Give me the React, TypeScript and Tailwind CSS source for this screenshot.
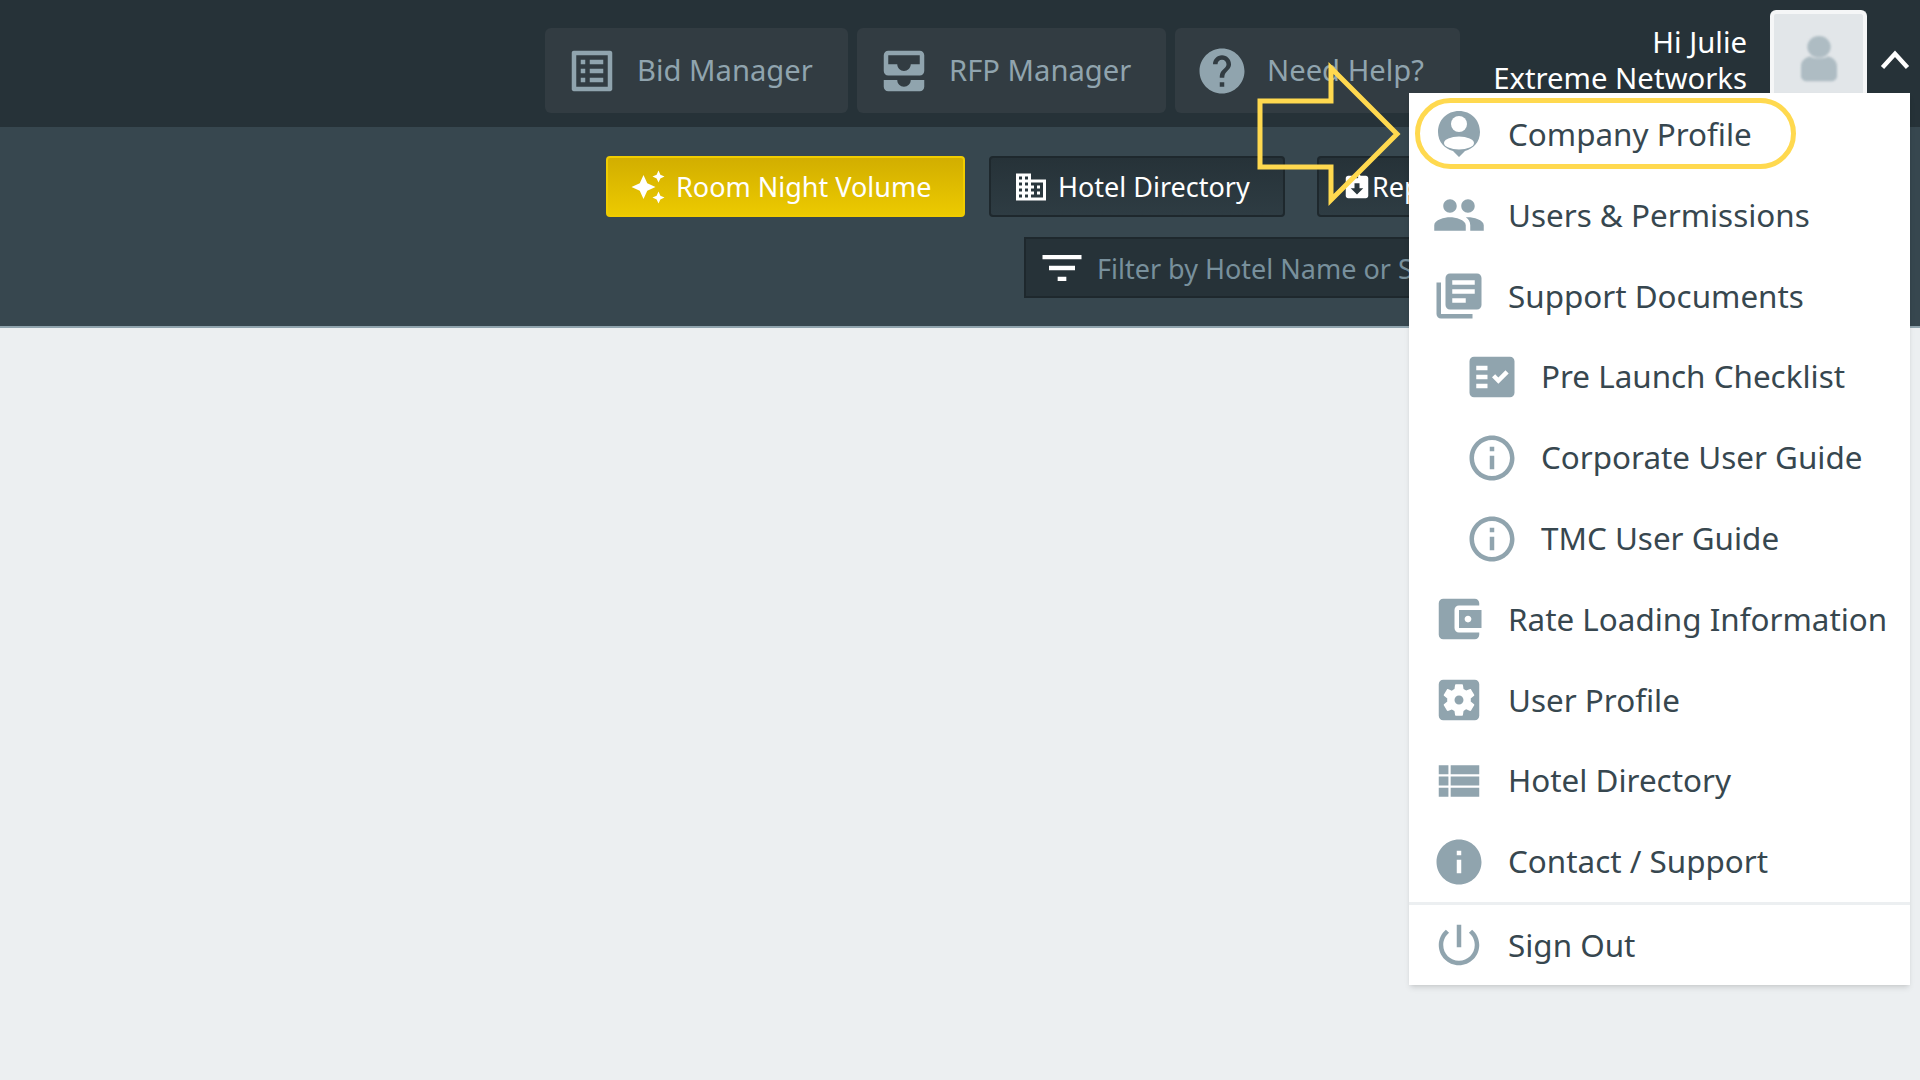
import React from "react";

// material style icon paths
const icons = {
  listAlt: "M19 5v14H5V5h14m1.1-2H3.9c-.5 0-.9.4-.9.9v16.2c0 .4.4.9.9.9h16.2c.4 0 .9-.5.9-.9V3.9c0-.5-.5-.9-.9-.9zM11 7h6v2h-6V7zm0 4h6v2h-6v-2zm0 4h6v2h-6zM7 7h2v2H7zm0 4h2v2H7zm0 4h2v2H7z",
  inbox: "M19 3H5c-1.1 0-2 .9-2 2v7c0 1.1.9 2 2 2h14c1.1 0 2-.9 2-2V5c0-1.1-.9-2-2-2zm0 6h-4c0 1.62-1.38 3-3 3s-3-1.38-3-3H5V5h14v4zm-4 7h6v3c0 1.1-.9 2-2 2H5c-1.1 0-2-.9-2-2v-3h6c0 1.66 1.34 3 3 3s3-1.34 3-3z",
  help: "M12 2C6.48 2 2 6.48 2 12s4.48 10 10 10 10-4.48 10-10S17.52 2 12 2zm1 17h-2v-2h2v2zm2.07-7.75l-.9.92C13.45 12.9 13 13.5 13 15h-2v-.5c0-1.1.45-2.1 1.17-2.83l1.24-1.26c.37-.36.59-.86.59-1.41 0-1.1-.9-2-2-2s-2 .9-2 2H8c0-2.21 1.79-4 4-4s4 1.79 4 4c0 .88-.36 1.68-.93 2.25z",
  sparkle: "M19 9l1.25-2.75L23 5l-2.75-1.25L19 1l-1.25 2.75L15 5l2.75 1.25zm-7.5.5L9 4 6.5 9.5 1 12l5.5 2.5L9 20l2.5-5.5L17 12zM19 15l-1.25 2.75L15 19l2.75 1.25L19 23l1.25-2.75L23 19l-2.75-1.25z",
  domain: "M12 7V3H2v18h20V7H12zM6 19H4v-2h2v2zm0-4H4v-2h2v2zm0-4H4V9h2v2zm0-4H4V5h2v2zm4 12H8v-2h2v2zm0-4H8v-2h2v2zm0-4H8V9h2v2zm0-4H8V5h2v2zm10 12h-8v-2h2v-2h-2v-2h2v-2h-2V9h8v10zm-2-8h-2v2h2v-2zm0 4h-2v2h2v-2z",
  report: "M19 3h-4.18C14.4 1.84 13.3 1 12 1c-1.3 0-2.4.84-2.82 2H5c-1.1 0-2 .9-2 2v14c0 1.1.9 2 2 2h14c1.1 0 2-.9 2-2V5c0-1.1-.9-2-2-2zm-7 0c.55 0 1 .45 1 1s-.45 1-1 1-1-.45-1-1 .45-1 1-1zm0 15l-5-5h3V9h4v4h3l-5 5z",
  filter: "M10 18h4v-2h-4v2zM3 6v2h18V6H3zm3 7h12v-2H6v2z",
  people: "M16 11c1.66 0 2.99-1.34 2.99-3S17.66 5 16 5c-1.66 0-3 1.34-3 3s1.34 3 3 3zm-8 0c1.66 0 2.99-1.34 2.99-3S9.66 5 8 5C6.34 5 5 6.34 5 8s1.34 3 3 3zm0 2c-2.33 0-7 1.17-7 3.5V19h14v-2.5c0-2.33-4.67-3.5-7-3.5zm8 0c-.29 0-.62.02-.97.05 1.16.84 1.97 1.97 1.97 3.45V19h6v-2.5c0-2.33-4.67-3.5-7-3.5z",
  books: "M4 6H2v14c0 1.1.9 2 2 2h14v-2H4V6zm16-4H8c-1.1 0-2 .9-2 2v12c0 1.1.9 2 2 2h12c1.1 0 2-.9 2-2V4c0-1.1-.9-2-2-2zm-1 9H9V9h10v2zm-4 4H9v-2h6v2zm4-8H9V5h10v2z",
  factCheck: "M20,3H4C2.9,3,2,3.9,2,5v14c0,1.1,0.9,2,2,2h16c1.1,0,2-0.9,2-2V5C22,3.9,21.1,3,20,3z M10,17H5v-2h5V17z M10,13H5v-2h5V13z M10,9H5V7h5V9z M14.82,15L12,12.16l1.41-1.41l1.41,1.42L17.99,9l1.42,1.42L14.82,15z",
  infoOutline: "M11 7h2v2h-2zm0 4h2v6h-2zm1-9C6.48 2 2 6.48 2 12s4.48 10 10 10 10-4.48 10-10S17.52 2 12 2zm0 18c-4.41 0-8-3.59-8-8s3.59-8 8-8 8 3.59 8 8-3.59 8-8 8z",
  wallet: "M21 18v1c0 1.1-.9 2-2 2H5c-1.11 0-2-.9-2-2V5c0-1.1.89-2 2-2h14c1.1 0 2 .9 2 2v1h-9c-1.11 0-2 .9-2 2v8c0 1.1.89 2 2 2h9zm-9-2h10V8H12v8zm4-2.5c-.83 0-1.5-.67-1.5-1.5s.67-1.5 1.5-1.5 1.5.67 1.5 1.5-.67 1.5-1.5 1.5z",
  settings: "M12 10c-1.1 0-2 .9-2 2s.9 2 2 2 2-.9 2-2-.9-2-2-2zm7-7H5c-1.11 0-2 .9-2 2v14c0 1.1.89 2 2 2h14c1.11 0 2-.9 2-2V5c0-1.1-.89-2-2-2zm-1.75 9c0 .23-.02.46-.05.68l1.48 1.16c.13.11.17.3.08.45l-1.4 2.42c-.09.15-.27.21-.43.15l-1.74-.7c-.36.28-.76.51-1.18.69l-.26 1.85c-.03.17-.18.3-.35.3h-2.8c-.17 0-.32-.13-.35-.29l-.26-1.85c-.43-.18-.82-.41-1.18-.69l-1.74.7c-.16.06-.34 0-.43-.15l-1.4-2.42c-.09-.15-.05-.34.08-.45l1.48-1.16c-.03-.23-.05-.46-.05-.69 0-.23.02-.46.05-.68l-1.48-1.16c-.13-.11-.17-.3-.08-.45l1.4-2.42c.09-.15.27-.21.43-.15l1.74.7c.36-.28.76-.51 1.18-.69l.26-1.85c.03-.17.18-.3.35-.3h2.8c.17 0 .32.13.35.29l.26 1.85c.43.18.82.41 1.18.69l1.74-.7c.16-.06.34 0 .43.15l1.4 2.42c.09.15.05.34-.08.45l-1.48 1.16c.03.23.05.46.05.69z",
  viewList: "M3 14h4.300v-4H3v4zm0 5h4.300v-4H3v4zM3 9h4.300V5H3v4zm5.300 5H21v-4H8.300v4zm0 5H21v-4H8.300v4zm0-14v4H21V5H8.300z",
  info: "M12 2C6.48 2 2 6.48 2 12s4.48 10 10 10 10-4.48 10-10S17.52 2 12 2zm1 15h-2v-6h2v6zm0-8h-2V7h2v2z",
  power: "M13 3h-2v10h2V3zm4.83 2.17l-1.42 1.42C17.99 7.86 19 9.81 19 12c0 3.87-3.13 7-7 7s-7-3.13-7-7c0-2.19 1.01-4.14 2.58-5.42L6.17 5.17C4.23 6.82 3 9.26 3 12c0 4.97 4.03 9 9 9s9-4.03 9-9c0-2.74-1.23-5.18-3.17-6.83z",
};

function Icon({ d, className }: { d: string; className: string }) {
  return (
    <svg viewBox="0 0 24 24" fill="currentColor" className={className}>
      <path d={d} />
    </svg>
  );
}

// pin shaped person badge used for the company profile row
function CompanyIcon() {
  return (
    <svg viewBox="0 0 54 54" className="w-[54px] h-[54px] shrink-0">
      <path d="M27 3C15 3 6 12 6 24c0 10 7 17 15 19l6 6 6-6c8-2 15-9 15-19C48 12 39 3 27 3z" fill="#90a4ae" />
      <ellipse cx="27" cy="16" rx="8" ry="8" fill="#fff" />
      <ellipse cx="27" cy="35" rx="15" ry="6.500" fill="#fff" />
    </svg>
  );
}

const menuItems = [
  { label: "Users & Permissions", icon: icons.people, nested: false },
  { label: "Support Documents", icon: icons.books, nested: false },
  { label: "Pre Launch Checklist", icon: icons.factCheck, nested: true },
  { label: "Corporate User Guide", icon: icons.infoOutline, nested: true },
  { label: "TMC User Guide", icon: icons.infoOutline, nested: true },
  { label: "Rate Loading Information", icon: icons.wallet, nested: false },
  { label: "User Profile", icon: icons.settings, nested: false },
  { label: "Hotel Directory", icon: icons.viewList, nested: false },
  { label: "Contact / Support", icon: icons.info, nested: false },
];

function NavButton({ icon, label, width }: { icon: string; label: string; width: string }) {
  return (
    <div className={`${width} h-[85px] flex items-center gap-[18px] pl-5 rounded-md bg-[#323c42] text-[#90a4ae]`}>
      <Icon d={icon} className="w-[54px] h-[54px] shrink-0" />
      <span className="text-[29.200px] pt-px whitespace-nowrap">{label}</span>
    </div>
  );
}

export default function App() {
  return (
    <div className="relative w-[1920px] h-[1080px] overflow-hidden bg-[#eceff1] font-['Noto_Sans',sans-serif]">
      {/* Top bar */}
      <header className="h-[127px] bg-[#263238] flex items-start pl-[545px]">
        <div className="flex gap-[9px] mt-[28px]">
          <NavButton icon={icons.listAlt} label="Bid Manager" width="w-[303px]" />
          <NavButton icon={icons.inbox} label="RFP Manager" width="w-[309px]" />
          <NavButton icon={icons.help} label="Need Help?" width="w-[285px]" />
        </div>
        <div className="ml-auto flex items-start">
          <div className="mt-[24px] text-right text-white text-[29.300px] leading-[36px] whitespace-nowrap">
            <div>Hi Julie</div>
            <div>Extreme Networks</div>
          </div>
          <div className="ml-[23px] mt-[10px] w-[97px] h-[90px] rounded-t-md border-[4px] border-b-0 border-[#f5f6f7] bg-[#e2e6e9] flex items-start justify-center">
            <svg viewBox="0 0 40 64" preserveAspectRatio="none" className="w-[36px] h-[46px] mt-[22px] blur-[1px]">
              <ellipse cx="20" cy="15" rx="13" ry="15" fill="#aebcc3" />
              <path d="M10 28c3 4 17 4 20 0 6 2 10 7 10 14v14c0 4-3 7-7 7H7c-4 0-7-3-7-7V42c0-7 4-12 10-14z" fill="#aebcc3" />
            </svg>
          </div>
          <svg viewBox="0 0 24 24" fill="none" stroke="#fff" strokeWidth="3.500" className="w-[30px] h-[30px] ml-[13px] mr-[10px] mt-[45px] shrink-0">
            <path d="M2 18 L12 7 L22 18" />
          </svg>
        </div>
      </header>

      {/* Sub bar */}
      <section className="h-[201px] bg-[#37474f] border-b-2 border-[#90a4ae] pl-[606px] pt-[29px]">
        <div className="flex gap-6 items-start text-[27px] text-white">
          <div className="w-[359px] h-[61px] flex items-center pl-[22px] gap-[10px] rounded border-2 border-[#f0cc00] bg-gradient-to-b from-[#d2ae00] to-[#ecca00]">
            <Icon d={icons.sparkle} className="w-9 h-9 shrink-0" />
            <span className="pt-[2px] whitespace-nowrap">Room Night Volume</span>
          </div>
          <div className="w-[296px] h-[61px] flex items-center pl-[22px] gap-[9px] rounded border-2 border-[#1e282d] bg-gradient-to-b from-[#263238] to-[#2e3c43]">
            <Icon d={icons.domain} className="w-9 h-9 shrink-0" />
            <span className="pt-[2px] whitespace-nowrap">Hotel Directory</span>
          </div>
          <div className="ml-2 w-[200px] h-[61px] flex items-center pl-[23px] gap-0 rounded border-2 border-[#1e282d] bg-gradient-to-b from-[#263238] to-[#2e3c43]">
            <Icon d={icons.report} className="w-[30px] h-[30px] shrink-0" />
            <span className="pt-[2px]">Reports</span>
          </div>
        </div>
        <div className="ml-[418px] mt-5 w-[480px] h-[61px] flex items-center pl-[10px] gap-[9px] border-2 border-[#1e282d] bg-[#263238] text-[#78909c] text-[27px] whitespace-nowrap overflow-hidden">
          <Icon d={icons.filter} className="w-[52px] h-[52px] shrink-0 text-white" />
          <span className="pt-1">Filter by Hotel Name or State</span>
        </div>
      </section>

      {/* Dropdown menu */}
      <div className="absolute left-[1409px] top-[93px] w-[501px] pt-px bg-white shadow-md text-[#37474f] text-[31.400px]">
        <div className="h-[81px] flex items-center pl-[23px] gap-[22px]">
          <CompanyIcon />
          <span className="pb-[2px] whitespace-nowrap">Company Profile</span>
        </div>
        {menuItems.map((item) => (
          <div key={item.label} className={`h-[80.800px] flex items-center gap-[22px] ${item.nested ? "pl-[56px]" : "pl-[23px]"}`}>
            <Icon d={item.icon} className="w-[54px] h-[54px] shrink-0 text-[#90a4ae]" />
            <span className="pb-[2px] whitespace-nowrap">{item.label}</span>
          </div>
        ))}
        <div className="border-t-[3px] border-[#eceff1] h-[83px] flex items-center pl-[23px] gap-[22px]">
          <Icon d={icons.power} className="w-[54px] h-[54px] shrink-0 text-[#90a4ae]" />
          <span className="pb-[2px]">Sign Out</span>
        </div>
      </div>

      {/* Callout annotations */}
      <div className="absolute left-[1415px] top-[98px] w-[381px] h-[71px] rounded-[36px] border-[5px] border-[#ffd94f]" />
      <svg className="absolute left-[1250px] top-[60px] w-[160px] h-[150px]" viewBox="0 0 160 150" fill="none">
        <path d="M10 41 H81 V8 L147 74 L81 140 V107 H10 Z" stroke="#ffd94f" strokeWidth="5" />
      </svg>
    </div>
  );
}
